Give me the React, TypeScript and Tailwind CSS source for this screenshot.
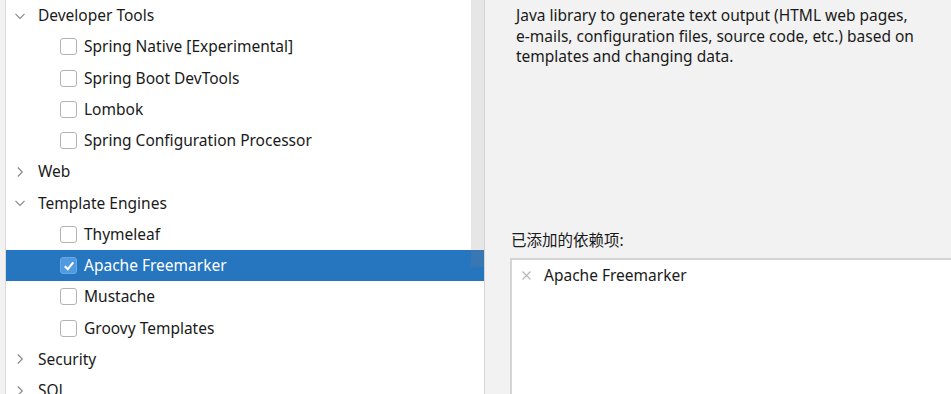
import React from "react";

const FONT = { fontFamily: '"Noto Sans", "Noto Sans CJK SC", sans-serif' };

function Chevron({ open }: { open: boolean }) {
  return (
    <svg width="12" height="12" viewBox="0 0 12 12" className="shrink-0">
      {open ? (
        <path d="M1.5 3.8 L6 8.3 L10.5 3.8" fill="none" stroke="#8a8a8a" strokeWidth="1.2" />
      ) : (
        <path d="M3.8 1.5 L8.3 6 L3.8 10.5" fill="none" stroke="#8a8a8a" strokeWidth="1.2" />
      )}
    </svg>
  );
}

function Checkbox({ checked }: { checked: boolean }) {
  if (checked) {
    return (
      <div className="w-[17px] h-[17px] rounded-[3px] bg-[#529ae0] border border-[#68a8e4] flex items-center justify-center shrink-0">
        <svg width="14" height="14" viewBox="0 0 14 14">
          <path d="M2.8 7.2 L5.8 10.2 L11.3 3.4" fill="none" stroke="#ffffff" strokeWidth="2.1" />
        </svg>
      </div>
    );
  }
  return <div className="w-[17px] h-[17px] rounded-[3px] bg-white border border-[#b3b3b3] shrink-0" />;
}

type Row =
  | { kind: "group"; label: string; open: boolean }
  | { kind: "item"; label: string; checked?: boolean };

const rows: Row[] = [
  { kind: "group", label: "Developer Tools", open: true },
  { kind: "item", label: "Spring Native [Experimental]" },
  { kind: "item", label: "Spring Boot DevTools" },
  { kind: "item", label: "Lombok" },
  { kind: "item", label: "Spring Configuration Processor" },
  { kind: "group", label: "Web", open: false },
  { kind: "group", label: "Template Engines", open: true },
  { kind: "item", label: "Thymeleaf" },
  { kind: "item", label: "Apache Freemarker", checked: true },
  { kind: "item", label: "Mustache" },
  { kind: "item", label: "Groovy Templates" },
  { kind: "group", label: "Security", open: false },
  { kind: "group", label: "SQL", open: false },
];

export default function App() {
  return (
    <div className="flex w-[951px] h-[394px] overflow-hidden bg-[#f2f2f2] text-[15.5px] text-[#1a1a1a]" style={FONT}>
      <div className="w-[5px] bg-[#f2f2f2] border-r border-[#d9d9d9] box-content" />
      <div className="relative w-[478px] bg-white border-r border-[#d4d4d4] box-content">
        <div className="flex flex-col">
          {rows.map((r, i) => {
            const selected = r.kind === "item" && r.checked;
            return (
              <div
                key={i}
                className={`h-[31.25px] flex items-center shrink-0 ${selected ? "bg-[#2675bf] text-white" : ""}`}
              >
                {r.kind === "group" ? (
                  <>
                    <div className="w-[32px] pl-[7.5px] flex items-center">
                      <Chevron open={r.open} />
                    </div>
                    <span>{r.label}</span>
                  </>
                ) : (
                  <>
                    <div className="w-[78px] pl-[54px] flex items-center">
                      <Checkbox checked={!!r.checked} />
                    </div>
                    <span>{r.label}</span>
                  </>
                )}
              </div>
            );
          })}
        </div>
        <div className="absolute right-0 top-0 w-[13px] h-[267px] bg-[rgba(128,128,128,0.2)]" />
      </div>
      <div className="flex-1 flex flex-col bg-[#f2f2f2]">
        <div className="pl-[31px] pr-[10px] pt-[5px] leading-[20.5px] whitespace-nowrap">
          Java library to generate text output (HTML web pages,
          <br />
          e-mails, configuration files, source code, etc.) based on
          <br />
          templates and changing data.
        </div>
        <div className="pl-[26px] mt-[163px] leading-[20px]">已添加的依赖项:</div>
        <div className="ml-[25px] mt-[8px] flex-1 bg-white border-l-2 border-t-2 border-[#d4d4d4]">
          <div className="flex items-center h-[32px] pl-[10px]">
            <svg width="9" height="9" viewBox="0 0 9 9" className="shrink-0">
              <path d="M0.5 0.5 L8.5 8.5 M8.5 0.5 L0.5 8.5" stroke="#b5b5b5" strokeWidth="1.1" />
            </svg>
            <span className="ml-[13px]">Apache Freemarker</span>
          </div>
        </div>
      </div>
    </div>
  );
}
